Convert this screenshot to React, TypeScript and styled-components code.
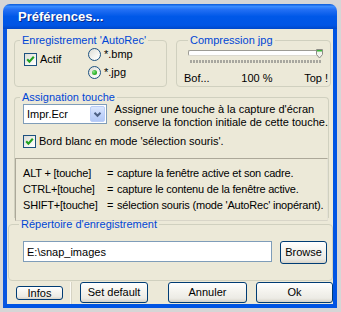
import React from 'react';
import styled, { createGlobalStyle } from 'styled-components';

const GlobalStyle = createGlobalStyle`
  html, body {
    margin: 0;
    padding: 0;
    background: #d6d6d6;
  }
  body {
    font-family: "Liberation Sans", Arial, sans-serif;
    font-size: 11px;
    color: #000;
    white-space: nowrap;
  }
`;

const Screen = styled.div`
  width: 341px;
  height: 312px;
  padding: 4px 0 0 3px;
  box-sizing: border-box;
  overflow: hidden;
`;

const Window = styled.div`
  width: 334px;
  display: flex;
  flex-direction: column;
`;

const TitleBar = styled.div`
  height: 25px;
  border-radius: 7px 7px 0 0;
  background: linear-gradient(
    to bottom,
    #0a5ad8 0%,
    #3b8cff 10%,
    #2470f4 22%,
    #0058e8 50%,
    #0055e5 85%,
    #0047c9 100%
  );
  display: flex;
  align-items: center;
  padding-left: 15px;
  color: #fff;
  font-weight: bold;
  font-size: 13px;
  text-shadow: 1px 1px 0 #0a2a8a;
`;

const Frame = styled.div`
  border: 4px solid #0054e3;
  border-top: none;
  border-left-color: #0a56e0;
  background: #ece9d8;
  height: 279px;
  box-sizing: border-box;
  display: flex;
  flex-direction: column;
`;

const TopRow = styled.div`
  display: flex;
  gap: 9px;
  padding: 5px 2px 0 7px;
`;

const Group = styled.fieldset<{ $w: number; $h: number; $open?: boolean; $ml?: number; $mt?: number }>`
  margin: 0;
  margin-left: ${({ $ml }) => $ml ?? 0}px;
  margin-top: ${({ $mt }) => $mt ?? 0}px;
  padding: 0;
  min-width: 0;
  width: ${({ $w }) => $w}px;
  height: ${({ $h }) => $h}px;
  box-sizing: border-box;
  border: 1px solid #d0d0bf;
  border-radius: 4px;
  ${({ $open }) =>
    $open &&
    `
    border-bottom: none;
    border-radius: 4px 4px 0 0;
  `}
`;

const Legend = styled.legend<{ $ml?: number }>`
  color: #0046d5;
  padding: 0 2px;
  margin-left: ${({ $ml }) => $ml ?? 5}px;
  line-height: 13px;
`;

const AutoRecBody = styled.div`
  display: flex;
  align-items: flex-start;
  padding: 5px 0 0 9px;
`;

const CheckRow = styled.label<{ $w?: number }>`
  display: flex;
  align-items: center;
  gap: 3px;
  height: 14px;
  ${({ $w }) => ($w ? `width: ${$w}px;` : '')}
`;

const CheckBox = styled.span`
  width: 13px;
  height: 13px;
  box-sizing: border-box;
  border: 1px solid #1c5180;
  background: linear-gradient(135deg, #dcdcd5 0%, #f4f4f0 60%, #fff 100%);
  display: flex;
  align-items: center;
  justify-content: center;
`;

const RadioCol = styled.div`
  display: flex;
  flex-direction: column;
  gap: 4px;
  margin-top: -5px;
`;

const RadioCircle = styled.span`
  width: 13px;
  height: 13px;
  box-sizing: border-box;
  border: 1px solid #1c5180;
  border-radius: 50%;
  background: linear-gradient(135deg, #dcdcd5 0%, #f5f5f1 60%, #fff 100%);
  display: flex;
  align-items: center;
  justify-content: center;
`;

const RadioDot = styled.span`
  width: 5px;
  height: 5px;
  border-radius: 50%;
  background: radial-gradient(circle at 35% 35%, #8ee58b 0%, #2fb52c 55%, #1a8f18 100%);
`;

const CompressionBody = styled.div`
  display: flex;
  flex-direction: column;
  padding: 3px 0 0 0;
`;

const SliderArea = styled.div`
  position: relative;
  margin: 0 8px 0 11px;
`;

const Track = styled.div`
  height: 6px;
  box-sizing: border-box;
  border: 1px solid #9d9c95;
  border-bottom-color: #dcdad0;
  border-right-color: #dcdad0;
  border-radius: 2px;
  background: #fff;
`;

const Thumb = styled.svg`
  position: absolute;
  right: -1px;
  top: -1px;
`;

const Ticks = styled.div`
  height: 3px;
  margin: 4px 9px 0 13px;
  background: repeating-linear-gradient(
    to right,
    #a8a79f 0,
    #a8a79f 2px,
    transparent 2px,
    transparent 3px
  );
`;

const ScaleLabels = styled.div`
  display: flex;
  justify-content: space-between;
  padding: 0 2px 0 7px;
  margin-top: 9px;
  line-height: 13px;
`;

const TouchRow = styled.div`
  display: flex;
  align-items: flex-start;
  padding-left: 8px;
`;

const Combo = styled.div`
  width: 88px;
  height: 20px;
  box-sizing: border-box;
  border: 1px solid #7f9db9;
  background: #fff;
  display: flex;
  align-items: center;
  justify-content: space-between;
  padding: 1px 1px 1px 3px;
`;

const ComboButton = styled.span`
  width: 15px;
  height: 16px;
  border-radius: 2px;
  border: 1px solid #b9cdf7;
  box-sizing: border-box;
  background: linear-gradient(to bottom, #dce7fd 0%, #c3d5fb 50%, #b2c8f6 100%);
  display: flex;
  align-items: center;
  justify-content: center;
`;

const Hint = styled.div`
  margin-left: 8px;
  line-height: 13px;
  margin-top: -1px;
`;

const BorderRow = styled.div`
  padding-left: 8px;
  margin-top: 5px;
`;

const InfoBox = styled.div`
  margin-top: 10px;
  height: 63px;
  box-sizing: border-box;
  border: 1px solid #aca899;
  border-right-color: #e4e2d6;
  border-bottom-color: #d8d5c8;
  padding: 6px 0 0 7px;
  display: grid;
  grid-template-columns: 84px 10px 1fr;
  grid-auto-rows: 16px;
  align-items: center;
  letter-spacing: -0.2px;
`;

const FolderRow = styled.div`
  display: flex;
  align-items: flex-start;
  padding: 10px 0 0 14px;
  gap: 8px;
`;

const TextInput = styled.div`
  width: 249px;
  height: 21px;
  box-sizing: border-box;
  border: 1px solid #7f9db9;
  background: #fff;
  padding-left: 3px;
  display: flex;
  align-items: center;
`;

const Button = styled.button<{ $w: number; $h?: number; $ml?: number }>`
  width: ${({ $w }) => $w}px;
  height: ${({ $h }) => $h ?? 21}px;
  margin-left: ${({ $ml }) => $ml ?? 0}px;
  box-sizing: border-box;
  padding: 0;
  border: 1px solid #003c74;
  border-radius: 3px;
  background: linear-gradient(to bottom, #ffffff 0%, #f5f4ef 40%, #ecebe5 80%, #d8d3c8 100%);
  font-family: inherit;
  font-size: 11px;
  line-height: 11px;
  color: #000;
  display: flex;
  align-items: center;
  justify-content: center;
`;

const ButtonRow = styled.div`
  display: flex;
  align-items: flex-start;
  height: 22px;
  margin-top: 1px;
`;

const InfosCell = styled.div`
  width: 64px;
  height: 22px;
  box-sizing: border-box;
  border-right: 1px solid #fbfaf4;
  box-shadow: 1px 0 0 #d6d3c4;
  padding: 4px 0 0 9px;
  margin-right: 9px;
`;

const Check = () => (
  <CheckBox>
    <svg width="9" height="9" viewBox="0 0 9 9">
      <polyline points="1.2,4.2 3.4,6.6 7.8,1.8" fill="none" stroke="#21a121" strokeWidth="2.1" />
    </svg>
  </CheckBox>
);

const Radio = ({ on, label }: { on?: boolean; label: string }) => (
  <CheckRow>
    <RadioCircle>{on && <RadioDot />}</RadioCircle>
    <span>{label}</span>
  </CheckRow>
);

export default function App() {
  return (
    <Screen>
      <GlobalStyle />
      <Window>
        <TitleBar>Préférences...</TitleBar>
        <Frame>
          <TopRow>
            <Group $w={153} $h={53}>
              <Legend>Enregistrement 'AutoRec'</Legend>
              <AutoRecBody>
                <CheckRow $w={64}>
                  <Check />
                  <span>Actif</span>
                </CheckRow>
                <RadioCol>
                  <Radio label="*.bmp" />
                  <Radio on label="*.jpg" />
                </RadioCol>
              </AutoRecBody>
            </Group>
            <Group $w={155} $h={53}>
              <Legend $ml={11}>Compression jpg</Legend>
              <CompressionBody>
                <SliderArea>
                  <Track />
                  <Thumb width="7" height="10" viewBox="0 0 7 10">
                    <path d="M0.5 0.5 H6.5 V5.5 L3.5 9 L0.5 5.5 Z" fill="#f3f3ee" stroke="#8d8c86" />
                    <rect x="1" y="1" width="5" height="1.5" fill="#3cb43a" />
                  </Thumb>
                </SliderArea>
                <Ticks />
                <ScaleLabels>
                  <span>Bof...</span>
                  <span>100 %</span>
                  <span>Top !</span>
                </ScaleLabels>
              </CompressionBody>
            </Group>
          </TopRow>

          <Group $w={315} $h={127} $open $ml={7} $mt={4}>
            <Legend>Assignation touche</Legend>
            <TouchRow>
              <Combo>
                <span>Impr.Ecr</span>
                <ComboButton>
                  <svg width="9" height="7" viewBox="0 0 9 7">
                    <polyline points="1.5,1.8 4.5,4.8 7.5,1.8" fill="none" stroke="#4d6185" strokeWidth="2" />
                  </svg>
                </ComboButton>
              </Combo>
              <Hint>
                Assigner une touche à la capture d'écran
                <br />
                conserve la fonction initiale de cette touche.
              </Hint>
            </TouchRow>
            <BorderRow>
              <CheckRow>
                <Check />
                <span>Bord blanc en mode 'sélection souris'.</span>
              </CheckRow>
            </BorderRow>
            <InfoBox>
              <span>ALT + [touche]</span>
              <span>=</span>
              <span>capture la fenêtre active et son cadre.</span>
              <span>CTRL+[touche]</span>
              <span>=</span>
              <span>capture le contenu de la fenêtre active.</span>
              <span>SHIFT+[touche]</span>
              <span>=</span>
              <span>sélection souris (mode 'AutoRec' inopérant).</span>
            </InfoBox>
          </Group>

          <Group $w={325} $h={63} $ml={1}>
            <Legend $ml={10}>Répertoire d'enregistrement</Legend>
            <FolderRow>
              <TextInput>E:\snap_images</TextInput>
              <Button $w={47} $h={23}>Browse</Button>
            </FolderRow>
          </Group>

          <ButtonRow>
            <InfosCell>
              <Button $w={47} $h={14}>Infos</Button>
            </InfosCell>
            <Button $w={68}>Set default</Button>
            <Button $w={79} $ml={20}>Annuler</Button>
            <Button $w={77} $ml={9}>Ok</Button>
          </ButtonRow>
        </Frame>
      </Window>
    </Screen>
  );
}
